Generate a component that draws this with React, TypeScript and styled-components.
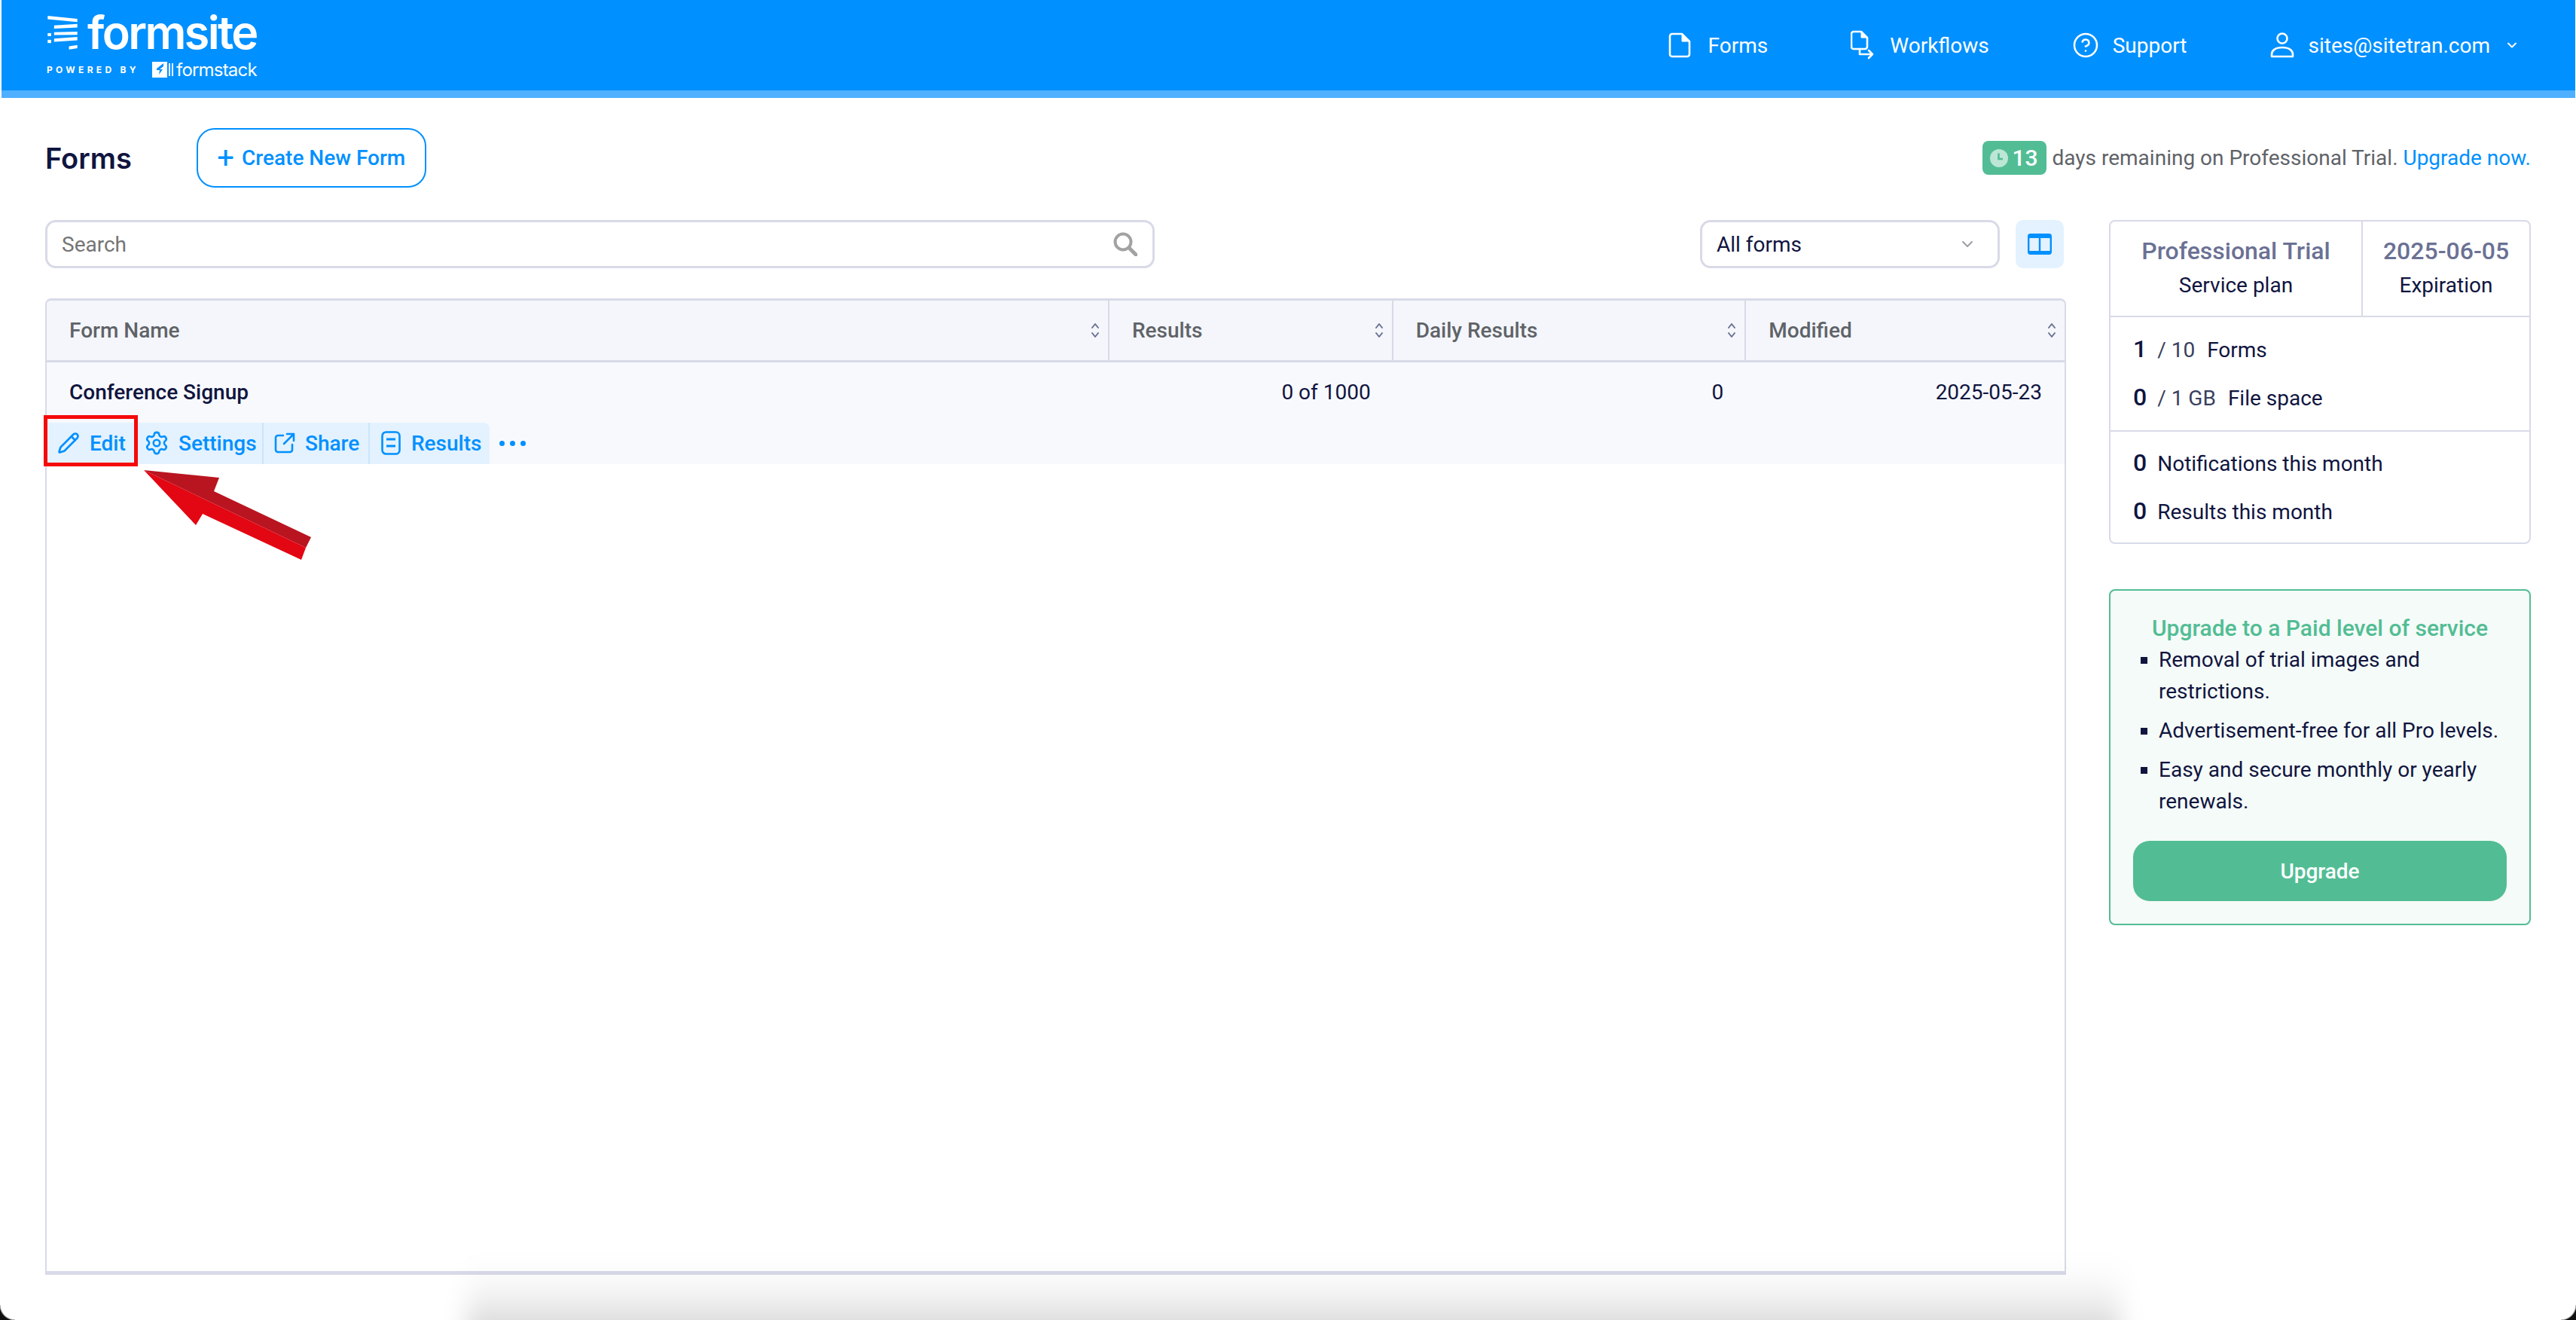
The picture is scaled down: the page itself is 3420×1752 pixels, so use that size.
import styled, { createGlobalStyle } from 'styled-components'
import { Settings, Pencil, CircleHelp, ChevronDown } from 'lucide-react'

const GlobalStyle = createGlobalStyle`
  html, body {
    margin: 0;
    padding: 0;
    background: #fff;
  }
  * {
    box-sizing: border-box;
  }
`

const BLUE = '#0090ff'
const NAVY = '#10153f'
const LINE = '#d8dae8'
const GREEN = '#52bd94'

const LogoMark = () => (
  <svg width="42" height="46" viewBox="36 30 124 140" fill="#fff">
    <polygon points="38,33 158,45 158,58 38,47" />
    <polygon points="64,72 158,66 158,80 64,85" />
    <polygon points="64,99 158,97 158,110 64,111" />
    <polygon points="64,125 158,118 158,132 64,138" />
    <rect x="38" y="103" width="14" height="12" />
    <rect x="38" y="130" width="14" height="13" />
    <polygon points="124,156 158,151 158,164 124,169" />
  </svg>
)

const FormstackMark = () => (
  <svg width="30" height="23" viewBox="0 0 30 23">
    <path d="M0 1h20v21H0z" fill="#fff" />
    <path d="M6 10 15 3v4l-5 4h4l-5 7 1-6H6z" fill={BLUE} />
    <path d="M23 3v17M27 3v17" stroke="#fff" strokeWidth="2" />
  </svg>
)

const FileIcon = () => (
  <svg width="30" height="34" viewBox="0 0 30 34" fill="none" stroke="#fff" strokeWidth="2.6" strokeLinejoin="round">
    <path d="M5 2h13l10 10v17a3 3 0 0 1-3 3H5a3 3 0 0 1-3-3V5a3 3 0 0 1 3-3z" />
    <path d="M18 2v10h10z" fill="#fff" strokeWidth="1" />
  </svg>
)

const WorkflowIcon = () => (
  <svg width="32" height="40" viewBox="0 0 32 40" fill="none" stroke="#fff" strokeWidth="2.6" strokeLinejoin="round" strokeLinecap="round">
    <path d="M4 2h10l8 8v12a3 3 0 0 1-3 3H4a3 3 0 0 1-3-3V5a3 3 0 0 1 3-3z" />
    <path d="M14 2v8h8z" fill="#fff" strokeWidth="1" />
    <path d="M12 25v7h17M24 27l5 5-5 5" />
  </svg>
)

const UserIcon = () => (
  <svg width="32" height="34" viewBox="0 0 32 34" fill="none" stroke="#fff" strokeWidth="2.6" strokeLinejoin="round">
    <circle cx="16" cy="8" r="6.5" />
    <path d="M2 32v-3c0-5 5-9 14-9s14 4 14 9v3z" />
  </svg>
)

const ShareIcon = () => (
  <svg width="28" height="28" viewBox="0 0 28 28" fill="none" stroke={BLUE} strokeWidth="2.6" strokeLinecap="round" strokeLinejoin="round">
    <path d="M12 4H5a3 3 0 0 0-3 3v16a3 3 0 0 0 3 3h16a3 3 0 0 0 3-3v-7" />
    <path d="M17 2h9v9M26 2 13 15" />
  </svg>
)

const ResultsIcon = () => (
  <svg width="26" height="32" viewBox="0 0 26 32" fill="none" stroke={BLUE} strokeWidth="2.6" strokeLinecap="round">
    <rect x="1.5" y="1.5" width="23" height="29" rx="5" />
    <path d="M7 11h12M7 20h12" strokeWidth="3" strokeLinecap="butt" />
  </svg>
)

const SearchIcon = () => (
  <svg width="32" height="32" viewBox="0 0 32 32" fill="none" stroke="#a2a2a2" strokeWidth="4">
    <circle cx="13" cy="13" r="10.5" />
    <path d="M21 21l9 9" strokeWidth="5" strokeLinecap="round" />
  </svg>
)

const ColumnsIcon = () => (
  <svg width="32" height="28" viewBox="0 0 32 28" fill="none" stroke={BLUE} strokeWidth="2.4">
    <rect x="1.2" y="1.2" width="29.6" height="25.6" rx="2.5" />
    <path d="M16 2v24" />
    <path d="M1 3.5a2.5 2.5 0 0 1 2.5-2.5h25A2.5 2.5 0 0 1 31 3.5V6H1z" fill={BLUE} stroke="none" />
    <path d="M1 23h30v2a2.5 2.5 0 0 1-2.5 2.5h-25A2.5 2.5 0 0 1 1 25z" fill={BLUE} stroke="none" />
  </svg>
)

const SortIcon = () => (
  <svg width="12" height="21" viewBox="0 0 12 21" fill="none" stroke="#6b7194" strokeWidth="2" strokeLinecap="round" strokeLinejoin="round">
    <path d="M2 7l4-5 4 5M2 14l4 5 4-5" />
  </svg>
)

const ClockIcon = () => (
  <svg width="24" height="24" viewBox="0 0 24 24">
    <circle cx="12" cy="12" r="12" fill="#bce6d5" />
    <path d="M11.5 5.5v7.5h5.5" fill="none" stroke={GREEN} strokeWidth="2.6" />
  </svg>
)

const Arrow = styled.svg`
  position: absolute;
  left: 191px;
  top: 624px;
`

const Callout = () => (
  <Arrow width="222" height="120" viewBox="191 624 222 120">
    <polygon points="191,624 291,634 284,652 413,713 406,727" fill="#b91520" />
    <polygon points="191,624 406,727 400,743 269,682 260,697" fill="#e30613" />
  </Arrow>
)

const columns = [
  { label: 'Form Name', width: 1412 },
  { label: 'Results', width: 377 },
  { label: 'Daily Results', width: 469 },
  { label: 'Modified', width: 423 },
]

const actions = [
  { label: 'Edit', icon: <Pencil size={30} strokeWidth={2.1} />, width: 121, pad: 14, gap: 13 },
  { label: 'Settings', icon: <Settings size={34} strokeWidth={1.8} />, width: 167, pad: 8, gap: 12 },
  { label: 'Share', icon: <ShareIcon />, width: 141, pad: 14, gap: 13 },
  { label: 'Results', icon: <ResultsIcon />, width: 159, pad: 15, gap: 14 },
]

const benefits = [
  'Removal of trial images and restrictions.',
  'Advertisement-free for all Pro levels.',
  'Easy and secure monthly or yearly renewals.',
]

export default function App() {
  return (
    <>
      <GlobalStyle />
      <Page>
        <Header>
          <Logo>
            <LogoTop>
              <LogoMark />
              <Wordmark>formsite</Wordmark>
            </LogoTop>
            <LogoBottom>
              <PoweredBy>POWERED BY</PoweredBy>
              <FormstackMark />
              <Formstack>formstack</Formstack>
            </LogoBottom>
          </Logo>
          <Nav>
            <NavItem $gap={23}>
              <FileIcon />
              Forms
            </NavItem>
            <NavItem $gap={20}>
              <WorkflowIcon />
              Workflows
            </NavItem>
            <NavItem $gap={18}>
              <CircleHelp size={36} strokeWidth={1.7} />
              Support
            </NavItem>
            <NavItem $gap={19}>
              <UserIcon />
              sites@sitetran.com
              <ChevronDown size={20} strokeWidth={2.4} />
            </NavItem>
          </Nav>
        </Header>

        <Main>
          <TitleRow>
            <TitleGroup>
              <Title>Forms</Title>
              <CreateButton>
                <PlusSign>+</PlusSign>
                Create New Form
              </CreateButton>
            </TitleGroup>
            <TrialNote>
              <DaysBadge>
                <ClockIcon />
                13
              </DaysBadge>
              days remaining on Professional Trial.&nbsp;<UpgradeLink>Upgrade now.</UpgradeLink>
            </TrialNote>
          </TitleRow>

          <Content>
            <div>
              <Toolbar>
                <SearchBox>
                  <SearchInput placeholder="Search" />
                  <SearchIcon />
                </SearchBox>
                <ToolbarRight>
                  <FilterSelect>
                    All forms
                    <ChevronDown size={24} strokeWidth={1.8} color="#9a9aa2" />
                  </FilterSelect>
                  <ColumnsButton>
                    <ColumnsIcon />
                  </ColumnsButton>
                </ToolbarRight>
              </Toolbar>

              <Table>
                <TableHead>
                  {columns.map((col) => (
                    <HeadCell key={col.label} $width={col.width}>
                      {col.label}
                      <SortIcon />
                    </HeadCell>
                  ))}
                </TableHead>
                <Row>
                  <RowCells>
                    <FormName $width={1412}>Conference Signup</FormName>
                    <ValueCell $width={377}>0 of 1000</ValueCell>
                    <ValueCell $width={469}>0</ValueCell>
                    <ValueCell $width={423}>2025-05-23</ValueCell>
                  </RowCells>
                  <Actions>
                    <ActionGroup>
                      {actions.map((action) => (
                        <ActionButton key={action.label} $width={action.width} $pad={action.pad} $gap={action.gap}>
                          {action.icon}
                          {action.label}
                        </ActionButton>
                      ))}
                    </ActionGroup>
                    <MoreDots>
                      <i />
                      <i />
                      <i />
                    </MoreDots>
                  </Actions>
                </Row>
              </Table>
            </div>

            <Sidebar>
              <PlanCard>
                <PlanHead>
                  <PlanCell>
                    <PlanValue>Professional Trial</PlanValue>
                    <PlanLabel>Service plan</PlanLabel>
                  </PlanCell>
                  <PlanCell>
                    <PlanValue>2025-06-05</PlanValue>
                    <PlanLabel>Expiration</PlanLabel>
                  </PlanCell>
                </PlanHead>
                <StatGroup>
                  <Stat>
                    <StatNumber>1</StatNumber>
                    <StatLimit>/ 10</StatLimit>
                    <StatLabel>Forms</StatLabel>
                  </Stat>
                  <Stat>
                    <StatNumber>0</StatNumber>
                    <StatLimit>/ 1 GB</StatLimit>
                    <StatLabel>File space</StatLabel>
                  </Stat>
                </StatGroup>
                <StatGroup>
                  <Stat>
                    <StatNumber>0</StatNumber>
                    <StatLabel>Notifications this month</StatLabel>
                  </Stat>
                  <Stat>
                    <StatNumber>0</StatNumber>
                    <StatLabel>Results this month</StatLabel>
                  </Stat>
                </StatGroup>
              </PlanCard>

              <UpgradeCard>
                <UpgradeTitle>Upgrade to a Paid level of service</UpgradeTitle>
                <BenefitList>
                  {benefits.map((text) => (
                    <Benefit key={text}>{text}</Benefit>
                  ))}
                </BenefitList>
                <UpgradeButton>Upgrade</UpgradeButton>
              </UpgradeCard>
            </Sidebar>
          </Content>
        </Main>

        <EditHighlight />
        <Callout />
        <WindowShadow />
        <Corner $side="left" />
        <Corner $side="right" />
      </Page>
    </>
  )
}

const Page = styled.div`
  position: relative;
  width: 3420px;
  height: 1752px;
  overflow: hidden;
  background: #fff;
  font-family: Roboto, 'Liberation Sans', sans-serif;
  color: ${NAVY};
`

const Header = styled.header`
  height: 130px;
  margin: 0 1px 0 2px;
  padding: 0 74px 0 60px;
  display: flex;
  align-items: center;
  justify-content: space-between;
  background: ${BLUE};
  border-bottom: 10px solid #4fb0ff;
  color: #fff;
`

const Logo = styled.div`
  display: flex;
  flex-direction: column;
  gap: 10px;
  width: 280px;
`

const LogoTop = styled.div`
  display: flex;
  align-items: center;
  gap: 12px;
  height: 54px;
`

const Wordmark = styled.span`
  font-family: Inter, sans-serif;
  font-size: 61px;
  font-weight: 600;
  letter-spacing: -2.6px;
  line-height: 54px;
`

const LogoBottom = styled.div`
  display: flex;
  align-items: center;
  height: 24px;
`

const PoweredBy = styled.span`
  font-family: Inter, sans-serif;
  font-size: 12px;
  font-weight: 700;
  letter-spacing: 4.3px;
  width: 140px;
  white-space: nowrap;
`

const Formstack = styled.span`
  font-family: Inter, sans-serif;
  font-size: 24px;
  font-weight: 400;
  letter-spacing: -0.8px;
  margin-left: 2px;
`

const Nav = styled.nav`
  display: flex;
  align-items: center;
  gap: 110px;
`

const NavItem = styled.a<{ $gap: number }>`
  display: flex;
  align-items: center;
  gap: ${(p) => p.$gap}px;
  font-size: 28px;
  color: #fff;
`

const Main = styled.main`
  padding: 40px 60px 0;
`

const TitleRow = styled.div`
  height: 79px;
  margin-bottom: 43px;
  display: flex;
  align-items: center;
  justify-content: space-between;
`

const TitleGroup = styled.div`
  display: flex;
  align-items: center;
  gap: 86px;
`

const Title = styled.h1`
  margin: 0;
  font-family: Inter, sans-serif;
  font-size: 38px;
  font-weight: 600;
  color: ${NAVY};
`

const CreateButton = styled.button`
  height: 79px;
  width: 305px;
  display: flex;
  align-items: center;
  justify-content: center;
  gap: 10px;
  background: #fff;
  border: 2.5px solid ${BLUE};
  border-radius: 24px;
  font-family: Roboto, sans-serif;
  font-size: 28px;
  font-weight: 500;
  color: ${BLUE};
`

const PlusSign = styled.span`
  font-size: 40px;
  line-height: 40px;
  font-weight: 400;
`

const TrialNote = styled.div`
  display: flex;
  align-items: center;
  font-size: 28px;
  color: #5f6368;
  white-space: pre;
`

const DaysBadge = styled.span`
  display: flex;
  align-items: center;
  justify-content: center;
  gap: 5px;
  width: 85px;
  height: 45px;
  margin-right: 8px;
  border-radius: 8px;
  background: ${GREEN};
  font-size: 30px;
  font-weight: 500;
  color: #fff;
`

const UpgradeLink = styled.a`
  color: ${BLUE};
`

const Content = styled.div`
  display: grid;
  grid-template-columns: 2683px 560px;
  gap: 57px;
`

const Toolbar = styled.div`
  height: 64px;
  margin-bottom: 40px;
  display: flex;
  justify-content: space-between;
`

const SearchBox = styled.div`
  width: 1473px;
  display: flex;
  align-items: center;
  padding: 0 20px 0 19px;
  border: 3px solid ${LINE};
  border-radius: 14px;
`

const SearchInput = styled.input`
  flex: 1;
  border: 0;
  outline: 0;
  background: transparent;
  padding: 0;
  font-family: Roboto, sans-serif;
  font-size: 28px;
  &::placeholder {
    color: #757575;
  }
`

const ToolbarRight = styled.div`
  display: flex;
  gap: 21px;
  margin-right: 3px;
`

const FilterSelect = styled.div`
  width: 398px;
  display: flex;
  align-items: center;
  justify-content: space-between;
  padding: 0 28px 0 19px;
  border: 3px solid ${LINE};
  border-radius: 14px;
  font-size: 28px;
`

const ColumnsButton = styled.button`
  width: 64px;
  display: flex;
  align-items: center;
  justify-content: center;
  padding: 0;
  border: 0;
  border-radius: 10px;
  background: #e3f2fe;
`

const Table = styled.div`
  height: 1296px;
  border: 2px solid ${LINE};
  border-top-width: 3px;
  border-bottom-width: 5px;
  border-radius: 8px 8px 0 0;
`

const TableHead = styled.div`
  height: 82px;
  display: flex;
  background: #f4f6fb;
  border-bottom: 3px solid ${LINE};
  border-radius: 6px 6px 0 0;
`

const HeadCell = styled.div<{ $width: number }>`
  width: ${(p) => p.$width}px;
  display: flex;
  align-items: center;
  justify-content: space-between;
  padding: 0 11px 0 30px;
  border-right: 2px solid ${LINE};
  font-size: 28px;
  font-weight: 500;
  color: #5f6368;
  &:last-child {
    border-right: 0;
  }
`

const Row = styled.div`
  height: 135px;
  display: flex;
  flex-direction: column;
  justify-content: space-between;
  background: #f8f9fd;
`

const RowCells = styled.div`
  display: flex;
  height: 81px;
  align-items: center;
`

const FormName = styled.div<{ $width: number }>`
  width: ${(p) => p.$width}px;
  padding-left: 30px;
  font-size: 28px;
  font-weight: 500;
`

const ValueCell = styled.div<{ $width: number }>`
  width: ${(p) => p.$width}px;
  padding-right: 30px;
  text-align: right;
  font-size: 28px;
`

const Actions = styled.div`
  height: 56px;
  display: flex;
  align-items: center;
  gap: 13px;
`

const ActionGroup = styled.div`
  display: flex;
  height: 100%;
  background: #e3f2fe;
  border-radius: 0 8px 0 0;
`

const ActionButton = styled.a<{ $width: number; $pad: number; $gap: number }>`
  width: ${(p) => p.$width}px;
  display: flex;
  align-items: center;
  gap: ${(p) => p.$gap}px;
  padding-left: ${(p) => p.$pad}px;
  border-right: 2px solid #cbe5fd;
  font-size: 28px;
  font-weight: 500;
  color: ${BLUE};
  &:last-child {
    border-right: 0;
  }
  &:first-child {
    border-right: 0;
  }
`

const MoreDots = styled.div`
  display: flex;
  gap: 7px;
  i {
    width: 7px;
    height: 7px;
    border-radius: 50%;
    background: ${BLUE};
  }
`

const Sidebar = styled.aside`
  display: flex;
  flex-direction: column;
  gap: 60px;
`

const PlanCard = styled.section`
  height: 430px;
  border: 2.5px solid ${LINE};
  border-radius: 8px;
`

const PlanHead = styled.div`
  height: 127px;
  display: grid;
  grid-template-columns: 333px 1fr;
  border-bottom: 2.5px solid ${LINE};
`

const PlanCell = styled.div`
  display: flex;
  flex-direction: column;
  align-items: center;
  justify-content: center;
  gap: 10px;
  padding-bottom: 5px;
  & + & {
    border-left: 2px solid ${LINE};
  }
`

const PlanValue = styled.div`
  font-size: 32px;
  font-weight: 500;
  color: #6b7194;
`

const PlanLabel = styled.div`
  font-size: 28px;
`

const StatGroup = styled.div`
  height: 150px;
  display: flex;
  flex-direction: column;
  justify-content: center;
  gap: 33px;
  padding: 0 0 2px 30px;
  & + & {
    border-top: 2.5px solid ${LINE};
  }
`

const Stat = styled.div`
  display: flex;
  align-items: baseline;
  gap: 8px;
  height: 31px;
  line-height: 31px;
`

const StatNumber = styled.span`
  font-size: 32px;
  font-weight: 500;
  margin-right: 6px;
`

const StatLimit = styled.span`
  font-size: 28px;
  color: #3a3f5f;
  margin-right: 8px;
`

const StatLabel = styled.span`
  font-size: 28px;
`

const UpgradeCard = styled.section`
  height: 446px;
  padding: 30px 30px 30px;
  display: flex;
  flex-direction: column;
  background: #f5fbf8;
  border: 2.5px solid ${GREEN};
  border-radius: 8px;
`

const UpgradeTitle = styled.h3`
  margin: 0;
  text-align: center;
  font-size: 30px;
  font-weight: 500;
  line-height: 40px;
  color: ${GREEN};
`

const BenefitList = styled.ul`
  list-style: none;
  margin: 1px 0 0;
  padding: 0 0 0 10px;
  display: flex;
  flex-direction: column;
  gap: 10px;
`

const Benefit = styled.li`
  display: flex;
  gap: 15px;
  font-size: 28px;
  line-height: 42px;
  &::before {
    content: '';
    flex: none;
    width: 9px;
    height: 9px;
    margin-top: 17px;
    background: ${NAVY};
  }
`

const UpgradeButton = styled.button`
  height: 80px;
  margin-top: auto;
  border: 0;
  border-radius: 22px;
  background: ${GREEN};
  font-family: Roboto, sans-serif;
  font-size: 28px;
  font-weight: 500;
  color: #fff;
`

const EditHighlight = styled.div`
  position: absolute;
  left: 58px;
  top: 551px;
  width: 125px;
  height: 68px;
  border: 5px solid #f50a0a;
`

const WindowShadow = styled.div`
  position: absolute;
  left: 620px;
  right: 605px;
  top: 1670px;
  height: 120px;
  filter: blur(16px);
  background: linear-gradient(
    to bottom,
    rgba(0, 0, 0, 0) 0%,
    rgba(0, 0, 0, 0.02) 25%,
    rgba(0, 0, 0, 0.065) 50%,
    rgba(0, 0, 0, 0.125) 68%,
    rgba(0, 0, 0, 0.2) 100%
  );
`

const Corner = styled.div<{ $side: 'left' | 'right' }>`
  position: absolute;
  bottom: 0;
  ${(p) => p.$side}: 0;
  width: 20px;
  height: 20px;
  background: radial-gradient(
    circle at ${(p) => (p.$side === 'left' ? '100% 0' : '0 0')},
    transparent 19px,
    #111 21px
  );
`
